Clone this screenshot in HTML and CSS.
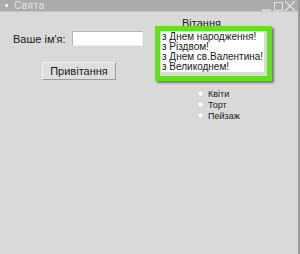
FILE: index.html
```html
<!DOCTYPE html>
<html lang="uk">
<head>
    <meta charset="UTF-8">
    <title>Свята</title>
    <link rel="stylesheet" href="styles.css">
</head>
<body>
    <div class="window">
        <div class="titlebar">
            <span class="title-dot"></span>
            <span class="title-text">Свята</span>
            <svg class="title-buttons" width="36" height="12" viewBox="0 0 36 12">
                <rect x="1" y="9.5" width="9" height="1.5" fill="#e4e4e4"/>
                <rect x="13.5" y="2.5" width="8" height="8" fill="none" stroke="#e4e4e4" stroke-width="1"/>
                <path d="M24 1 L34 11 M34 1 L24 11" stroke="#e4e4e4" stroke-width="1.2" fill="none"/>
            </svg>
        </div>
        <div class="content">
            <div class="left-col">
                <div class="name-row">
                    <label class="name-label" for="name">Ваше ім'я:</label>
                    <input class="name-entry" id="name" type="text">
                </div>
                <button class="greet-button">Привітання</button>
            </div>
            <div class="right-col">
                <div class="greet-title">Вітання</div>
                <div class="greet-frame">
                    <ul class="greet-list">
                        <li>з Днем народження!</li>
                        <li>з Різдвом!</li>
                        <li>з Днем св.Валентина!</li>
                        <li>з Великоднем!</li>
                    </ul>
                </div>
                <div class="radio-group">
                    <label class="radio-row"><span class="radio"></span>Квіти</label>
                    <label class="radio-row"><span class="radio"></span>Торт</label>
                    <label class="radio-row"><span class="radio"></span>Пейзаж</label>
                </div>
            </div>
        </div>
    </div>
</body>
</html>
```

FILE: styles.css
```css
body {
    margin: 0;
    font-family: "Liberation Sans", Arial, sans-serif;
    background: #d9d9d9;
}
.window {
    width: 298px;
    height: 254px;
    border-right: 2px solid #9a9a9a;
    background: #d9d9d9;
    overflow: hidden;
}
.titlebar {
    height: 12px;
    background: #ababab;
    display: flex;
    align-items: center;
    border-bottom: 1px solid #c4c4c4;
    box-sizing: border-box;
}
.title-dot {
    width: 3px;
    height: 3px;
    background: #e8e8e8;
    margin-left: 5px;
}
.title-text {
    margin-left: 6px;
    font-size: 10px;
    letter-spacing: 0.6px;
    color: #e2e2e2;
}
.title-buttons {
    margin-left: auto;
    margin-right: 1px;
}
.content {
    display: flex;
}
.left-col {
    width: 142px;
    padding-left: 13px;
    padding-top: 19px;
}
.name-row {
    display: flex;
    align-items: center;
}
.name-label {
    width: 59px;
    font-size: 11px;
    color: #1a1a1a;
}
.name-entry {
    width: 71px;
    height: 15px;
    box-sizing: border-box;
    margin: 0;
    padding: 0;
    border: 1px solid #b5b5b5;
    border-bottom-color: #eeeeee;
    border-right-color: #eeeeee;
    background: #ffffff;
}
.greet-button {
    display: block;
    margin: 16px 0 0 29px;
    width: 74px;
    height: 18px;
    padding: 0;
    font-family: "Liberation Sans", Arial, sans-serif;
    font-size: 11px;
    color: #1a1a1a;
    background: #dedede;
    border: 1px solid #f2f2f2;
    border-right-color: #9c9c9c;
    border-bottom-color: #9c9c9c;
}
.right-col {
    display: flex;
    flex-direction: column;
}
.greet-title {
    margin: 6px 0 0 27px;
    font-size: 11px;
    line-height: 11px;
    color: #1a1a1a;
}
.greet-frame {
    margin-top: -3px;
    width: 103px;
    border: 5px solid #62e21e;
    padding: 1px 3px 4px 1px;
    background: #d9d9d9;
    box-shadow: 2px 2px 2px rgba(0, 0, 0, 0.45);
}
.greet-list {
    list-style: none;
    margin: 0;
    padding: 0 0 0 1px;
    height: 40px;
    overflow: hidden;
    background: #ffffff;
    font-size: 10px;
    line-height: 10px;
    color: #1a1a1a;
    white-space: nowrap;
}
.radio-group {
    margin: 7px 0 0 42px;
    display: flex;
    flex-direction: column;
}
.radio-row {
    display: flex;
    align-items: center;
    height: 11px;
    font-size: 9px;
    color: #1a1a1a;
}
.radio {
    width: 7px;
    height: 7px;
    border-radius: 50%;
    background: #ffffff;
    border: 1px solid #c8c8c8;
    box-sizing: border-box;
    margin-right: 4px;
}
```
